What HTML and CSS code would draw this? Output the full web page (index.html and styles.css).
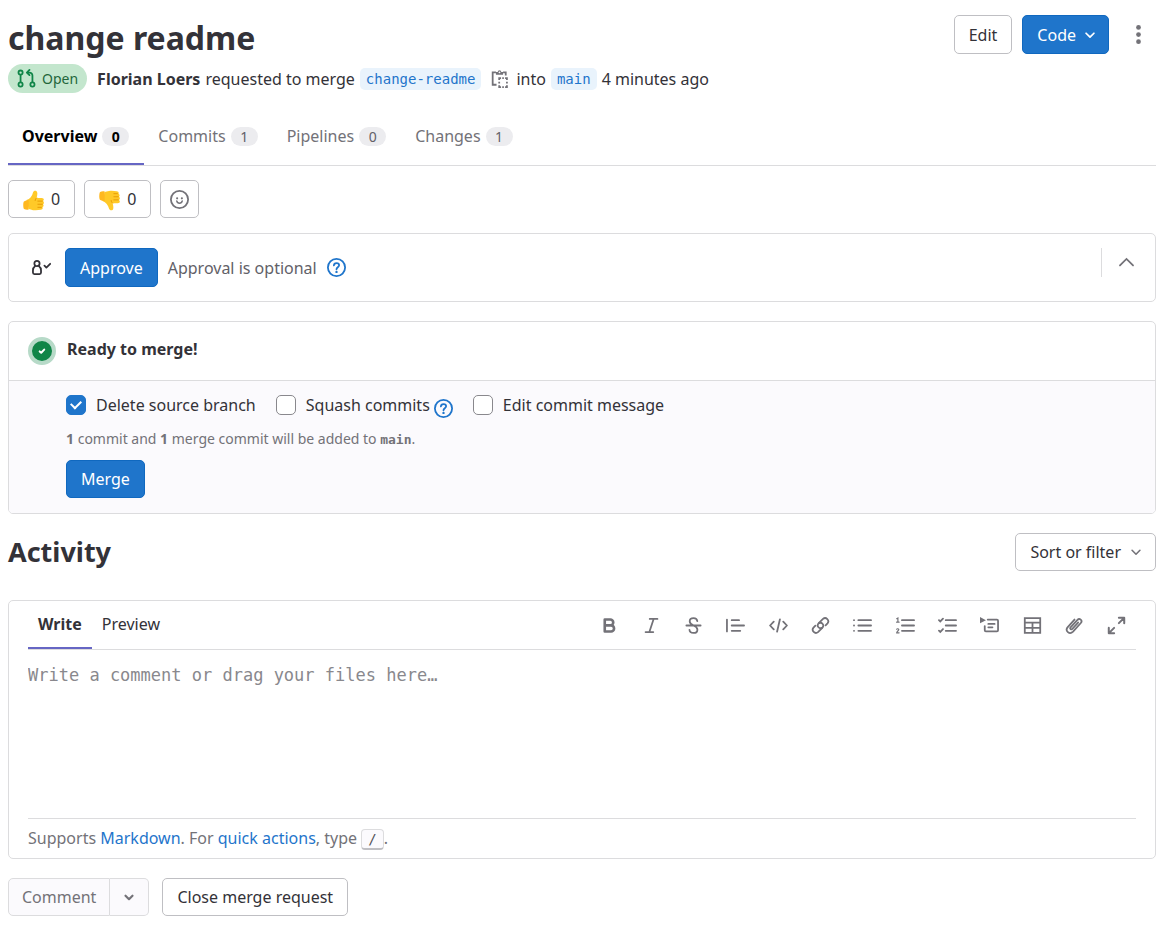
FILE: index.html
```html
<!DOCTYPE html>
<html lang="en">
<head>
<meta charset="utf-8">
<meta name="viewport" content="width=device-width, initial-scale=1">
<title>change readme</title>
<link rel="stylesheet" href="styles.css">
</head>
<body>
<main class="page">
  <header class="header">
    <div class="header-main">
      <h1 class="title">change readme</h1>
      <div class="meta">
        <span class="badge-open">
          <svg class="icon" viewBox="0 0 16 16" fill="none" stroke="currentColor" stroke-width="1.5"><circle cx="3" cy="3" r="1.75"/><circle cx="3" cy="13" r="1.75"/><circle cx="13" cy="13" r="1.75"/><path d="M3 5v6M13 11V5.500A2.500 2.500 0 0 0 10.500 3H8.500"/><path d="M10.500.8 8.300 3l2.200 2.200" stroke-linejoin="round" stroke-linecap="round"/></svg>
          Open
        </span>
        <strong>Florian Loers</strong>
        <span>requested to merge</span>
        <a class="ref" href="#source">change-readme</a>
        <button class="copy" type="button" aria-label="Copy branch name">
          <svg class="icon" viewBox="0 0 16 16" fill="none" stroke="currentColor" stroke-width="1.5"><path d="M5.500 13.250H2.250V2.750H5M11 2.750h2.250V5.500"/><path d="M5 4.750V2.500h1.500a1.500 1.500 0 0 1 3 0H11v2.250z" fill="currentColor" stroke="none"/><circle cx="8" cy="2.800" r=".8" fill="#fff" stroke="none"/><path d="M7.750 9.300V7.750H9.300M12.700 7.750h1.550V9.300M14.250 13.700v1.550H12.700M9.300 15.250H7.750V13.700M10.300 7.750h1.400M10.300 15.250h1.400M7.750 10.800v1.400M14.250 10.800v1.400"/></svg>
        </button>
        <span>into</span>
        <a class="ref" href="#target">main</a>
        <span>4 minutes ago</span>
      </div>
    </div>
    <div class="header-actions">
      <button class="btn" type="button">Edit</button>
      <button class="btn btn-primary btn-code" type="button">Code
        <svg class="icon-sm" viewBox="0 0 16 16" fill="none" stroke="currentColor" stroke-width="2" stroke-linecap="round" stroke-linejoin="round"><path d="m3.500 6 4.500 4.500L12.500 6"/></svg>
      </button>
      <button class="btn-more" type="button" aria-label="More actions">
        <svg class="icon" viewBox="0 0 16 16" fill="currentColor"><circle cx="8" cy="2" r="2"/><circle cx="8" cy="8" r="2"/><circle cx="8" cy="14" r="2"/></svg>
      </button>
    </div>
  </header>

  <nav class="tabs">
    <a class="tab tab-active" href="#overview">Overview <span class="count">0</span></a>
    <a class="tab" href="#commits">Commits <span class="count">1</span></a>
    <a class="tab" href="#pipelines">Pipelines <span class="count">0</span></a>
    <a class="tab" href="#changes">Changes <span class="count">1</span></a>
  </nav>

  <div class="awards">
    <button class="btn award" type="button" aria-label="Thumbs up 0">
      <svg class="emoji" viewBox="0 0 24 24"><path fill="#ffc928" d="M4 11.500c4-1.500 6.500-4.500 7.500-9C12 .5 15.800-.2 16.300 3c.3 2-.1 4-.8 6h5.800c2.800 0 3.200 2.700 1.500 3.700 1.600.9 1.400 3 0 3.600 1.200 1 .8 2.900-.5 3.400.6 1.500-.1 2.800-2 3-2.500.4-6 .7-8.800.3-2-.3-3.500-1-5-1.300z"/><path fill="#ffb820" d="M1 13c1.500-1 3.500-1.500 5.500-1.700v11c-1.700.4-3.800.3-5.300-.6C0 20 0 14.500 1 13z"/><path fill="none" stroke="#e59600" stroke-linecap="round" d="M17 12.700h5M17 16.300h5M17 19.800h4M15.500 9c-1 .9-1.500 1.700-1.600 3"/></svg>
      0
    </button>
    <button class="btn award" type="button" aria-label="Thumbs down 0">
      <svg class="emoji" viewBox="0 0 24 24"><g transform="matrix(1 0 0 -1 0 24)"><path fill="#ffc928" d="M4 11.500c4-1.500 6.500-4.500 7.500-9C12 .5 15.800-.2 16.300 3c.3 2-.1 4-.8 6h5.800c2.800 0 3.200 2.700 1.500 3.700 1.600.9 1.400 3 0 3.600 1.200 1 .8 2.900-.5 3.400.6 1.500-.1 2.800-2 3-2.500.4-6 .7-8.800.3-2-.3-3.500-1-5-1.300z"/><path fill="#ffb820" d="M1 13c1.500-1 3.500-1.500 5.500-1.700v11c-1.700.4-3.800.3-5.300-.6C0 20 0 14.500 1 13z"/><path fill="none" stroke="#e59600" stroke-linecap="round" d="M17 12.700h5M17 16.300h5M17 19.800h4M15.500 9c-1 .9-1.500 1.700-1.600 3"/></g></svg>
      0
    </button>
    <button class="btn btn-icon" type="button" aria-label="Add reaction">
      <svg class="icon" viewBox="0 0 16 16" fill="none" stroke="currentColor" stroke-width="1.5"><circle cx="8" cy="8" r="7.250"/><path d="M5.700 9.300c.3 1.200 1.200 1.900 2.300 1.900s2-.7 2.300-1.900" stroke-width="1.200" stroke-linecap="round"/><circle cx="6" cy="7" r=".9" fill="currentColor" stroke="none"/><circle cx="10" cy="7" r=".9" fill="currentColor" stroke="none"/></svg>
    </button>
  </div>

  <section class="card approval">
    <svg class="icon approval-icon" viewBox="0 0 16 16" fill="none" stroke="currentColor" stroke-width="1.500" stroke-linecap="round" stroke-linejoin="round"><circle cx="4.200" cy="4.700" r="2.200"/><path d="M2.500 7C1.300 7.800.8 8.900.8 10.500v1.800c0 .7.400 1.200 1.200 1.200h4.400c.8 0 1.200-.5 1.200-1.200v-1.800C7.600 8.900 7.100 7.800 5.900 7"/><path d="m10.500 6.500 1.600 1.600 3.200-3.200"/></svg>
    <button class="btn btn-primary" type="button">Approve</button>
    <span class="approval-text">Approval is optional</span>
    <a class="help" href="#approvals" aria-label="About approvals"><svg class="icon" viewBox="0 0 16 16" fill="none" stroke="currentColor" stroke-width="1.500"><circle cx="8" cy="8" r="7.250"/><path d="M5.800 6.300C5.900 5 6.800 4.250 8 4.250s2.200.8 2.200 1.950C10.200 7.800 8 7.900 8 9.500" stroke-linecap="round"/><circle cx="8" cy="11.700" r="1" fill="currentColor" stroke="none"/></svg></a>
    <div class="collapse">
      <button class="btn-more" type="button" aria-label="Collapse">
        <svg class="icon" viewBox="0 0 16 16" fill="none" stroke="currentColor" stroke-width="1.500" stroke-linecap="round"><path d="m2.500 10.500 5.500-5.500 5.500 5.500"/></svg>
      </button>
    </div>
  </section>

  <section class="card merge">
    <div class="merge-head">
      <span class="status"><svg class="status-icon" viewBox="0 0 16 16" fill="none" stroke="currentColor" stroke-width="2" stroke-linecap="round" stroke-linejoin="round"><path d="M5.700 8.400 7.200 9.800l3-3.200"/></svg></span>
      <strong>Ready to merge!</strong>
    </div>
    <div class="merge-body">
      <div class="options">
        <label class="option"><input class="check" type="checkbox" checked>Delete source branch</label>
        <div class="option-group">
          <label class="option"><input class="check" type="checkbox">Squash commits</label>
          <a class="help help-low" href="#squash" aria-label="About squashing"><svg class="icon" viewBox="0 0 16 16" fill="none" stroke="currentColor" stroke-width="1.500"><circle cx="8" cy="8" r="7.250"/><path d="M5.800 6.300C5.900 5 6.800 4.250 8 4.250s2.200.8 2.200 1.950C10.200 7.800 8 7.900 8 9.500" stroke-linecap="round"/><circle cx="8" cy="11.700" r="1" fill="currentColor" stroke="none"/></svg></a>
        </div>
        <label class="option"><input class="check" type="checkbox">Edit commit message</label>
      </div>
      <p class="merge-note"><strong>1</strong> commit and <strong>1</strong> merge commit will be added to <strong class="mono">main</strong>.</p>
      <button class="btn btn-primary" type="button">Merge</button>
    </div>
  </section>

  <div class="activity">
    <h2 class="subtitle">Activity</h2>
    <button class="btn btn-drop" type="button">Sort or filter
      <svg class="icon-sm" viewBox="0 0 16 16" fill="none" stroke="currentColor" stroke-width="1.800" stroke-linecap="round" stroke-linejoin="round"><path d="m3.500 6 4.500 4.500L12.500 6"/></svg>
    </button>
  </div>

  <section class="card editor">
    <div class="editor-bar">
      <button class="editor-tab editor-tab-active" type="button">Write</button>
      <button class="editor-tab" type="button">Preview</button>
      <div class="tools">
        <button class="tool" type="button" aria-label="Bold"><svg class="icon" viewBox="0 0 16 16" fill="none" stroke="currentColor" stroke-width="2.200" stroke-linejoin="round"><path d="M4 3h4.700a2.400 2.400 0 0 1 0 4.900H4zM4 7.900h5.300a2.550 2.550 0 0 1 0 5.100H4z"/></svg></button>
        <button class="tool" type="button" aria-label="Italic"><svg class="icon" viewBox="0 0 16 16" fill="none" stroke="currentColor" stroke-width="1.500" stroke-linecap="round"><path d="M6.500 2.500H13M3 13.500h6.500M9.800 2.500l-3.600 11"/></svg></button>
        <button class="tool" type="button" aria-label="Strikethrough"><svg class="icon" viewBox="0 0 16 16" fill="none" stroke="currentColor" stroke-width="1.500" stroke-linecap="round"><path d="M2 8h12M11.200 4.300C11 2.500 9.700 1.700 8 1.700c-1.900 0-3.200 1-3.200 2.700C4.800 6.600 6.500 7.300 8 8c1.700.7 3.300 1.600 3.300 3.500 0 1.700-1.300 2.800-3.300 2.800s-3.300-1-3.400-2.700"/></svg></button>
        <button class="tool" type="button" aria-label="Quote"><svg class="icon" viewBox="0 0 16 16" fill="none" stroke="currentColor" stroke-width="1.500" stroke-linecap="round"><path d="M.8 3v10M4.800 3.500H11M4.800 8h10.400M4.800 12.500H12"/></svg></button>
        <button class="tool" type="button" aria-label="Code"><svg class="icon" viewBox="0 0 16 16" fill="none" stroke="currentColor" stroke-width="1.500" stroke-linecap="round" stroke-linejoin="round"><path d="M4 4.700.9 8 4 11.300M12 4.700 15.100 8 12 11.300M9.200 2.800 6.800 13.200"/></svg></button>
        <button class="tool" type="button" aria-label="Link"><svg class="icon" viewBox="0 0 16 16" fill="none" stroke="currentColor" stroke-width="1.500" stroke-linecap="round"><path d="M9.300 9.900c-1 .6-2.300.4-3-.4-.9-1-.8-2.400.2-3.400l3.600-3.700a2.700 2.700 0 0 1 3.800 3.800l-1.600 1.600"/><path d="M6.700 6.100c1-.6 2.300-.4 3 .4.9 1 .8 2.400-.2 3.400l-3.600 3.700a2.700 2.700 0 0 1-3.800-3.800l1.600-1.600"/></svg></button>
        <button class="tool" type="button" aria-label="Bullet list"><svg class="icon" viewBox="0 0 16 16" fill="none" stroke="currentColor" stroke-width="1.500" stroke-linecap="round"><path d="M4.500 3.500h10.700M4.500 8h10.700M4.500 12.500h10.700M.8 3.500h.1M.8 8h.1M.8 12.500h.1"/></svg></button>
        <button class="tool" type="button" aria-label="Numbered list"><svg class="icon" viewBox="0 0 16 16" fill="none" stroke="currentColor" stroke-width="1.500" stroke-linecap="round"><path d="M5 3.500h10.200M5 8h10.200M5 12.500h10.200"/><path stroke-width="1" d="m.6 2.300 1-.6v3.500M.5 5.200h2.100M.6 11.200c.3-.7 1.900-.6 1.700.4C2.200 12.500.6 13 .6 14.200h2"/></svg></button>
        <button class="tool" type="button" aria-label="Task list"><svg class="icon" viewBox="0 0 16 16" fill="none" stroke="currentColor" stroke-width="1.500" stroke-linecap="round"><path d="M6.500 3.500h8.700M6.500 8h8.700M6.500 12.500h8.700M.8 3.500l1.100 1.100L4.200 2.200M.8 12.300l1.100 1.100L4.200 11"/></svg></button>
        <button class="tool" type="button" aria-label="Collapsible section"><svg class="icon" viewBox="0 0 16 16" fill="none" stroke="currentColor" stroke-width="1.500" stroke-linecap="round"><path d="M6.500 3h7.800c.6 0 .9.300.9.900v8.200c0 .6-.3.900-.9.900H4.900c-.6 0-.9-.3-.9-.9V8.500M7 6.700h5.300M7 9.500h3.500" stroke-linejoin="round"/><path d="M0 .8 5 3.500 0 6.200z" fill="currentColor" stroke="none"/></svg></button>
        <button class="tool" type="button" aria-label="Table"><svg class="icon" viewBox="0 0 16 16" fill="none" stroke="currentColor" stroke-width="1.500"><path d="M1.500 1.750h13v12.500h-13zM1.500 5.500h13M1.500 10h13M8 5.500v8.700"/></svg></button>
        <button class="tool" type="button" aria-label="Attach file"><svg class="icon" viewBox="0 0 16 16" fill="none" stroke="currentColor" stroke-width="1.500" stroke-linecap="round"><path d="m11 5.500-4.800 5.300c-1 1-2.400-.2-1.500-1.300l5.600-6.100c2-2 4.800.3 3 2.500l-6.500 7.300c-3 2.900-7.100-.7-4.500-3.800L8 3"/></svg></button>
        <button class="tool" type="button" aria-label="Full screen"><svg class="icon" viewBox="0 0 16 16" fill="none" stroke="currentColor" stroke-width="1.700" stroke-linecap="round" stroke-linejoin="round"><path d="M10 1.500h4.500V6M14.200 1.800 10 6M1.500 10v4.500H6M1.800 14.200 6 10"/></svg></button>
      </div>
    </div>
    <textarea class="comment-box" aria-label="Comment" placeholder="Write a comment or drag your files here…"></textarea>
    <div class="editor-foot">Supports <a href="#markdown">Markdown</a>. For <a href="#quick">quick actions</a>, type <kbd class="key">/</kbd>.</div>
  </section>

  <div class="actions">
    <div class="split">
      <button class="btn btn-muted" type="button">Comment</button>
      <button class="btn btn-muted btn-caret" type="button" aria-label="Comment options"><svg class="icon-sm" viewBox="0 0 16 16" fill="none" stroke="currentColor" stroke-width="2.500" stroke-linecap="round" stroke-linejoin="round"><path d="m4 6.500 4 4 4-4"/></svg></button>
    </div>
    <button class="btn btn-close" type="button">Close merge request</button>
  </div>
</main>
</body>
</html>
```
FILE: styles.css
```css
* { box-sizing: border-box; }
body {
  margin: 0;
  background: #fff;
  color: #333238;
  font-family: "Noto Sans", "Open Sans", sans-serif;
  font-size: 16px;
  line-height: 24px;
}
button { font: inherit; color: inherit; cursor: pointer; }
a { color: #1f75cb; text-decoration: none; }
svg { display: block; flex: none; }
.icon { width: 19px; height: 19px; }
.icon-sm { width: 14px; height: 14px; }
.page { padding: 15px 15px 20px 8px; }

.header { display: flex; justify-content: space-between; align-items: flex-start; }
.title { margin: 0; font-size: 32px; line-height: 46px; font-weight: 700; }
.meta { display: flex; align-items: center; flex-wrap: wrap; gap: 5px; margin-top: 3px; }
.badge-open {
  display: flex; align-items: center; gap: 6px;
  margin-right: 5px; padding: 0 9px; height: 29px;
  border-radius: 15px; background: #c3e6cd; color: #24663b; font-size: 14px;
}
.badge-open .icon { color: #108548; }
.ref {
  padding: 0 6px; border-radius: 5px; background: #e9f3fc;
  font: 14px/22px "DejaVu Sans Mono", monospace;
}
.copy { margin: 0 2px 0 4px; padding: 0; border: 0; background: none; color: #737278; }
.header-actions { display: flex; align-items: center; gap: 10px; }
.btn {
  display: inline-flex; align-items: center; justify-content: center; gap: 8px;
  height: 38px; padding: 0 14px;
  border: 1px solid #bfbfc3; border-radius: 5px; background: #fff;
}
.header-actions .btn { height: 39px; }
.btn-primary { background: #1f75cb; border-color: #1068bf; color: #fff; }
.btn-code { gap: 7px; padding: 0 11px 0 14px; }
.btn-more { display: flex; padding: 0; border: 0; background: none; color: #737278; }
.header-actions .btn-more { margin: 0 8px 0 10px; }

.tabs { display: flex; margin-top: 14px; border-bottom: 1px solid #dcdcde; }
.tab {
  display: flex; align-items: center; gap: 5px;
  padding: 17px 15px 15px 14px; color: #737278; border-bottom: 2px solid transparent;
}
.tab-active { color: #000; font-weight: 700; border-color: #6666c4; }
.count {
  min-width: 27px; padding: 0 9px; border-radius: 10px;
  background: #ececef; font-size: 14px; line-height: 19px; text-align: center;
}
.tab:not(.tab-active) .count { color: #626168; }

.awards { display: flex; gap: 9px; margin-top: 14px; }
.award { gap: 7px; }
.emoji { width: 21px; height: 21px; margin-top: 3px; }
.btn-icon { padding: 0 9px; color: #737278; }

.card { border: 1px solid #dcdcde; border-radius: 5px; }
.approval { display: flex; align-items: center; margin-top: 15px; padding: 14px 19px; gap: 10px; }
.approval .btn { height: 39px; }
.approval-icon { margin: 0 4px; }
.approval-text { color: #626168; }
.help { display: flex; color: #1f75cb; }
.collapse {
  display: flex; align-items: center; align-self: flex-start;
  height: 29px; margin-left: auto; padding-left: 15px; border-left: 1px solid #dcdcde;
}

.merge { margin-top: 19px; overflow: hidden; }
.merge-head { display: flex; align-items: center; gap: 11px; height: 58px; padding: 0 19px; }
.merge-head strong { padding-bottom: 4px; }
.status {
  display: flex; align-items: center; justify-content: center;
  width: 28px; height: 28px; border: 4px solid #b7dac8; border-radius: 50%;
  background: #108548; color: #fff;
}
.status-icon { width: 16px; height: 16px; }
.merge-body { padding: 11px 19px 15px 57px; border-top: 1px solid #dcdcde; background: #fbfafd; }
.options { display: flex; flex-wrap: wrap; gap: 20px; }
.option-group { display: flex; gap: 4px; }
.option { display: flex; align-items: center; gap: 10px; }
.help-low { padding-top: 7px; }
.check {
  appearance: none; display: grid; place-items: center;
  width: 20px; height: 20px; margin: 0;
  border: 1px solid #89888d; border-radius: 5px; background: #fff;
}
.check:checked { background: #1f75cb; border-color: #1f75cb; }
.check:checked::before {
  content: ""; width: 8px; height: 5px; margin-bottom: 3px;
  border-left: 2px solid #fff; border-bottom: 2px solid #fff; transform: rotate(-45deg);
}
.merge-note { margin: 9px 0 8px; color: #737278; font-size: 14px; }
.mono { font-family: "DejaVu Sans Mono", monospace; font-size: 13px; }

.activity { display: flex; justify-content: space-between; align-items: center; margin-top: 19px; }
.subtitle { margin: 0; font-size: 27px; line-height: 36px; }
.btn-drop .icon-sm { color: #737278; }
.btn-drop { padding: 0 12px 0 14px; }

.editor { margin-top: 29px; padding: 0 19px; }
.editor-bar { display: flex; height: 49px; border-bottom: 1px solid #dcdcde; }
.editor-tab { padding: 0 10px; border: 0; border-bottom: 2px solid transparent; background: none; }
.editor-tab-active { font-weight: 700; border-color: #6666c4; }
.tools { display: flex; flex: 0 1 546px; justify-content: space-between; margin-left: auto; align-items: center; }
.tool {
  display: flex; align-items: center; justify-content: center;
  width: 38px; height: 38px; padding: 0; border: 0; background: none; color: #737278;
}
.comment-box {
  display: block; width: 100%; height: 168px; padding: 13px 0; border: 0; outline: 0; resize: none;
  background: none; color: #333238; font: 17px/24px "DejaVu Sans Mono", monospace;
}
.comment-box::placeholder { color: #89888d; opacity: 1; }
.editor-foot { padding: 7px 0 8px; border-top: 1px solid #dcdcde; color: #737278; }
.key {
  padding: 1px 6px; border: 1px solid #dcdcde; border-bottom: 2px solid #bfbfc3; border-radius: 4px;
  background: #fbfafd; color: #535158; font: 14px/16px "DejaVu Sans Mono", monospace;
}

.actions { display: flex; gap: 13px; margin-top: 19px; }
.split { display: flex; }
.btn-muted { padding: 0 13px; background: #fbfafd; border-color: #dcdcde; color: #737278; border-radius: 5px 0 0 5px; }
.btn-caret { padding: 0 12px; border-left: 0; border-radius: 0 5px 5px 0; }
```
